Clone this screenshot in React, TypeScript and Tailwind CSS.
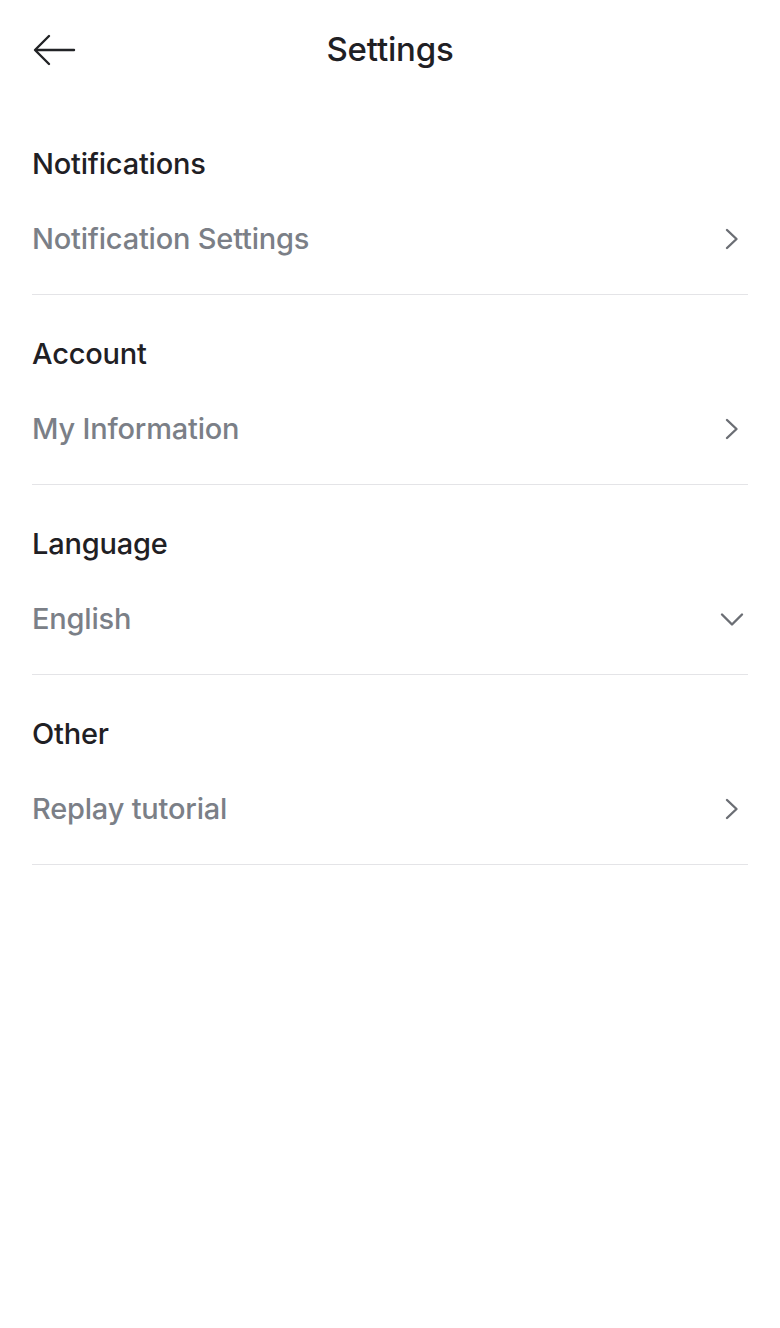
const sections = [
  { title: "Notifications", item: "Notification Settings", icon: "right" },
  { title: "Account", item: "My Information", icon: "right" },
  { title: "Language", item: "English", icon: "down" },
  { title: "Other", item: "Replay tutorial", icon: "right" },
];

function BackArrow() {
  return (
    <svg width="44" height="34" viewBox="0 0 44 34" fill="none" stroke="#222326" strokeWidth="2.4" strokeLinecap="round" strokeLinejoin="round">
      <path d="M42 17H4" />
      <path d="M17 3L3 17l14 14" />
    </svg>
  );
}

function ChevronRight() {
  return (
    <svg width="16" height="24" viewBox="0 0 16 24" fill="none" stroke="#6b6e74" strokeWidth="2.4" strokeLinecap="round" strokeLinejoin="round">
      <path d="M3 3l9.5 9L3 21" />
    </svg>
  );
}

function ChevronDown() {
  return (
    <svg width="26" height="16" viewBox="0 0 26 16" fill="none" stroke="#6b6e74" strokeWidth="2.4" strokeLinecap="round" strokeLinejoin="round">
      <path d="M3 3.5l10 10 10-10" />
    </svg>
  );
}

export default function App() {
  return (
    <div className="min-h-[1328px] w-[780px] bg-white font-['Inter',sans-serif] px-8">
      <header className="relative flex h-[100px] items-center justify-center">
        <button className="absolute left-0 top-[33px]">
          <BackArrow />
        </button>
        <h1 className="text-[33px] font-medium text-[#1f2024] tracking-[-0.2px]">Settings</h1>
      </header>
      <div className="pt-[5px]">
        {sections.map((s) => (
          <section key={s.title} className="border-b border-[#e4e4e7] pt-[41px] pb-[37px]">
            <h2 className="text-[29px] leading-[36px] font-medium text-[#1f2024] tracking-[-0.2px]">{s.title}</h2>
            <div className="mt-[39px] flex items-center justify-between">
              <span className="text-[29px] leading-[36px] font-medium text-[#7b7f87] tracking-[-0.2px]">{s.item}</span>
              {s.icon === "right" ? (
                <span className="mr-[8px] flex">
                  <ChevronRight />
                </span>
              ) : (
                <span className="mr-[3px] flex">
                  <ChevronDown />
                </span>
              )}
            </div>
          </section>
        ))}
      </div>
    </div>
  );
}
